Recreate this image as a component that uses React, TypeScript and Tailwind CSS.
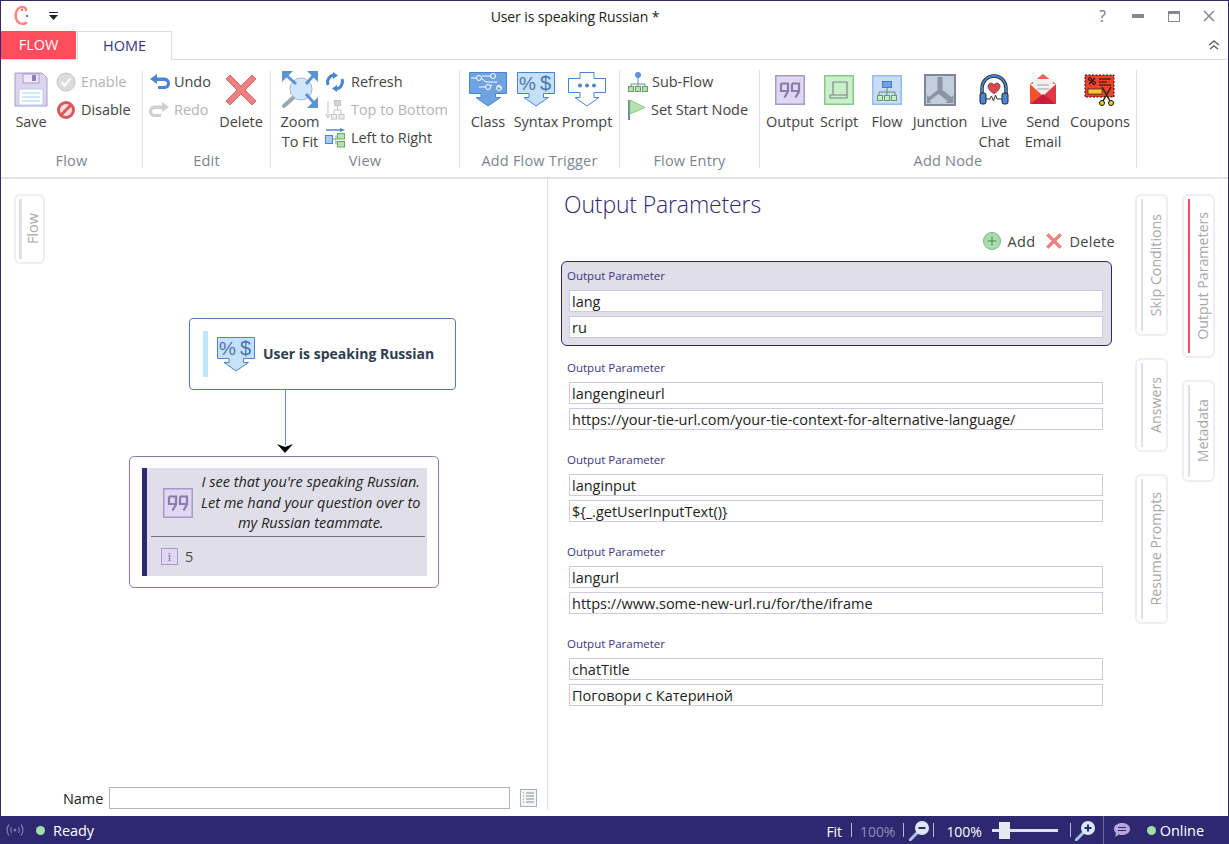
import type { ReactNode } from 'react';

const NAVY = '#2e2870';

function SaveIcon() {
  return (
    <svg width="34" height="35" viewBox="0 0 34 35">
      <path d="M1 1h27l5 5v28H1z" fill="#dcd3ee" stroke="#a99cc9" />
      <rect x="9" y="2" width="16" height="9" fill="#efeaf7" stroke="#a99cc9" />
      <rect x="18" y="3" width="4" height="6" fill="#8d80b5" />
      <rect x="5" y="17" width="24" height="16" fill="#fff" stroke="#b9cfe8" />
      <path d="M8 21h18M8 25h18M8 29h18" stroke="#a9d0f0" strokeWidth="1" />
    </svg>
  );
}

function CircleCheck() {
  return (
    <svg width="20" height="20" viewBox="0 0 20 20">
      <circle cx="10" cy="10" r="9" fill="#dcdcdc" stroke="#c4c4c4" />
      <path d="M5.5 10l3 3.500 6-7" fill="none" stroke="#fff" strokeWidth="2" />
    </svg>
  );
}

function CircleBan() {
  return (
    <svg width="20" height="20" viewBox="0 0 20 20">
      <circle cx="10" cy="10" r="7.500" fill="#f6dede" stroke="#d9585c" strokeWidth="3" />
      <path d="M5 15L15 5" stroke="#d9585c" strokeWidth="3" />
    </svg>
  );
}

function UndoIcon({ color = '#4a86cf', flip = false }: { color?: string; flip?: boolean }) {
  return (
    <svg width="21" height="18" viewBox="0 0 21 18" className={flip ? '-scale-x-100' : ''}>
      <path d="M8 1L1 6l7 5V8h7c2 0 3 1 3 2.500S17 13 15 13H9v3h6c4 0 6-2.500 6-5.500S19 4.500 15 4.500H8z" fill={color} />
    </svg>
  );
}

function RedX({ size = 32 }: { size?: number }) {
  return (
    <svg width={size} height={size} viewBox="0 0 32 32">
      <path d="M5 1l11 11L27 1l4 4-11 11 11 11-4 4-11-11L5 31l-4-4 11-11L1 5z" fill="#f08080" stroke="#dc6a6a" />
    </svg>
  );
}

function ZoomFitIcon() {
  return (
    <svg width="38" height="38" viewBox="0 0 38 38">
      <path d="M14 25L3 35" stroke="#9aa8b4" strokeWidth="4" strokeLinecap="round" />
      <circle cx="20" cy="18" r="11" fill="#cfe6fb" stroke="#a8b8c6" />
      <g stroke="#5b93d6" strokeWidth="3">
        <path d="M15 13L5 4" />
        <path d="M25 13l8-9" />
        <path d="M25 23l8 9" />
      </g>
      <g fill="#5b93d6">
        <path d="M1 0h11L1 11z" />
        <path d="M37 0H26l11 11z" />
        <path d="M37 37H26l11-11z" />
      </g>
    </svg>
  );
}

function RefreshIcon() {
  return (
    <svg width="20" height="20" viewBox="0 0 20 20">
      <g fill="none" stroke="#4a86cf" strokeWidth="3">
        <path d="M3 13A7.500 7.500 0 0 1 9 3" />
        <path d="M17 7a7.500 7.500 0 0 1-6 10" />
      </g>
      <path d="M8 0l5 3.500L8 7zM12 13v7l-5-3.500z" fill="#4a86cf" />
    </svg>
  );
}

function TopBottomIcon() {
  return (
    <svg width="20" height="20" viewBox="0 0 20 20" fill="none" stroke="#c4c4c4">
      <path d="M3 1v16M0.500 14L3 18l2.500-4" />
      <rect x="9.500" y="0.500" width="6" height="5" fill="#d4d4d4" />
      <path d="M12.500 6v4M9 14v-4h7v4" />
      <rect x="6.500" y="14.500" width="5" height="4.500" fill="#eee" />
      <rect x="14" y="14.500" width="5" height="4.500" fill="#eee" />
    </svg>
  );
}

function LeftRightIcon() {
  return (
    <svg width="21" height="20" viewBox="0 0 21 20">
      <path d="M1 2h15" stroke="#4a86cf" strokeWidth="1.500" />
      <path d="M15 0l5 2-5 2z" fill="#4a86cf" />
      <rect x="0.500" y="7.500" width="7" height="8" fill="#a9cdf0" stroke="#4a86cf" />
      <path d="M8 11h3M11 7.500v9" stroke="#7aa86f" fill="none" />
      <rect x="12.500" y="5.500" width="7" height="5.500" fill="#b7e0b5" stroke="#6aa866" />
      <rect x="12.500" y="13.500" width="7" height="5.500" fill="#b7e0b5" stroke="#6aa866" />
    </svg>
  );
}

function ClassIcon() {
  return (
    <svg width="38" height="35" viewBox="0 0 38 35">
      <path d="M0.500 0.500h37v21h-11v4h5L19 34 7 25.500h5v-4H0.500z" fill="#6fa3e0" stroke="#4a86cf" />
      <g fill="none" stroke="#fff">
        <path d="M2 6h6M12 6l5 4h11M13 4h9M10 15h7M21 14l2-1M28 14l4 2" />
        <circle cx="10" cy="6" r="2.500" />
        <circle cx="24" cy="4" r="2.500" />
        <circle cx="19" cy="15" r="2.500" />
        <circle cx="30" cy="16" r="2.500" />
      </g>
    </svg>
  );
}

function SyntaxIcon() {
  return (
    <svg width="38" height="35" viewBox="0 0 38 35">
      <path d="M0.500 0.500h37v21h-11v4h5L19 34 7 25.500h5v-4H0.500z" fill="#c5e0f8" stroke="#4a86cf" />
      <text x="2" y="18" fontSize="19" fill="#4a76a8" fontFamily="'Liberation Sans', sans-serif">%</text>
      <text x="23" y="18" fontSize="20" fill="#4a76a8" fontFamily="'Liberation Sans', sans-serif">$</text>
    </svg>
  );
}

function PromptIcon() {
  return (
    <svg width="38" height="35" viewBox="0 0 38 35">
      <path d="M12 0.500h14v6h11.500v14H26v5h5L19 34 7 25.500h5v-5H0.500v-14H12z" fill="#fff" stroke="#4a86cf" />
      <circle cx="12" cy="13.500" r="2" fill="#4a86cf" />
      <circle cx="19" cy="13.500" r="2" fill="#4a86cf" />
      <circle cx="26" cy="13.500" r="2" fill="#4a86cf" />
    </svg>
  );
}

function SubFlowIcon() {
  return (
    <svg width="20" height="20" viewBox="0 0 20 20">
      <circle cx="10" cy="3" r="3" fill="#5b93d6" />
      <path d="M10 6v6M3 14v-2h14v2M10 12v2" fill="none" stroke="#6a8a9a" />
      <rect x="0.500" y="14.500" width="5" height="5" fill="#b7e0b5" stroke="#5f9e5b" />
      <rect x="7.500" y="14.500" width="5" height="5" fill="#b7e0b5" stroke="#5f9e5b" />
      <rect x="14.500" y="14.500" width="5" height="5" fill="#b7e0b5" stroke="#5f9e5b" />
    </svg>
  );
}

function FlagIcon() {
  return (
    <svg width="20" height="22" viewBox="0 0 20 22">
      <path d="M1 1v20" stroke="#6b8aa5" strokeWidth="2" />
      <path d="M2 1l15 7.500L2 15z" fill="#b5e3b0" stroke="#8cc788" />
    </svg>
  );
}

function QuoteIcon({ size = 30 }: { size?: number }) {
  return (
    <svg width={size} height={size} viewBox="0 0 30 30">
      <rect x="0.750" y="0.750" width="28.500" height="28.500" fill="#e0d7f3" stroke="#a79ac8" strokeWidth="1.500" />
      <g fill="none" stroke="#8a7ba8" strokeWidth="2.200">
        <path d="M6 8.500h7v8l-3.500 6" />
        <path d="M6 8.500v7.500h7" />
        <path d="M17 8.500h7v8l-3.500 6" />
        <path d="M17 8.500v7.500h7" />
      </g>
    </svg>
  );
}

function ScriptIcon() {
  return (
    <svg width="30" height="30" viewBox="0 0 30 30">
      <rect x="0.750" y="0.750" width="28.500" height="28.500" fill="#c9efcb" stroke="#86c989" strokeWidth="1.500" />
      <path d="M9 7h14v13H9zM9 20H6v3h17v-3" fill="none" stroke="#7a8a7c" strokeWidth="1.200" />
    </svg>
  );
}

function FlowIcon() {
  return (
    <svg width="30" height="30" viewBox="0 0 30 30">
      <rect x="0.750" y="0.750" width="28.500" height="28.500" fill="#c9dcf5" stroke="#93bdf0" strokeWidth="1.500" />
      <rect x="10.500" y="6.500" width="9" height="6" fill="#6fa3e8" stroke="#4a7cc0" />
      <path d="M15 13v4M7 20v-3h16v3M15 17v3" fill="none" stroke="#5f8a70" />
      <rect x="5.500" y="20.500" width="5" height="5" fill="#c9efcb" stroke="#5f9e5b" />
      <rect x="12.500" y="20.500" width="5" height="5" fill="#c9efcb" stroke="#5f9e5b" />
      <rect x="19.500" y="20.500" width="5" height="5" fill="#c9efcb" stroke="#5f9e5b" />
    </svg>
  );
}

function JunctionIcon() {
  return (
    <svg width="32" height="32" viewBox="0 0 32 32">
      <rect x="1" y="1" width="30" height="30" fill="#c3cedc" stroke="#7d8894" strokeWidth="2" />
      <path d="M13.500 3h5v13l9 7 2-2v8h-8l2-2-9-7-9 7 2 2H3v-8l2 2 8.500-7z" fill="#8a96a6" />
    </svg>
  );
}

function LiveChatIcon() {
  return (
    <svg width="30" height="32" viewBox="0 0 30 32">
      <path d="M3 20v-6a12 12 0 0 1 24 0v6" fill="none" stroke="#222" strokeWidth="3.400" />
      <path d="M3 20v-6a12 12 0 0 1 24 0v6" fill="none" stroke="#4a86d8" strokeWidth="1.800" />
      <path d="M15 20c-4-3-6-5-6-7.500C9 10.500 10.500 9 12 9c1.300 0 2.400.700 3 1.800C15.600 9.700 16.700 9 18 9c1.500 0 3 1.500 3 3.500 0 2.500-2 4.500-6 7.500z" fill="#d9464e" stroke="#333" strokeWidth="0.600" />
      <path d="M7 25h4l1.500-3 2 5 2-6 1.500 4h5" fill="none" stroke="#333" />
      <rect x="1" y="19" width="6" height="11" rx="2" fill="#4a86d8" stroke="#222" />
      <rect x="23" y="19" width="6" height="11" rx="2" fill="#4a86d8" stroke="#222" />
    </svg>
  );
}

function EmailIcon() {
  return (
    <svg width="28" height="31" viewBox="0 0 28 31">
      <path d="M14 0L27 10H1z" fill="#f0624a" />
      <rect x="4" y="5" width="20" height="18" fill="#f1f1f1" />
      <path d="M8 11h12M8 15h12" stroke="#c8c8c8" strokeWidth="2" />
      <path d="M1 10l13 12L1 30z" fill="#f4512c" />
      <path d="M27 10L14 22l13 8z" fill="#e23744" />
      <path d="M1 30l13-10 13 10z" fill="#c81e3c" />
    </svg>
  );
}

function CouponIcon() {
  return (
    <svg width="32" height="32" viewBox="0 0 32 32">
      <rect x="1" y="1" width="29" height="22" fill="#f0402a" stroke="#111" strokeDasharray="2 1.500" />
      <path d="M5 10l6-6" stroke="#111" strokeWidth="1.200" />
      <circle cx="6" cy="5" r="1.500" fill="#f0402a" stroke="#111" />
      <circle cx="10" cy="9" r="1.500" fill="#f0402a" stroke="#111" />
      <path d="M15 5h12M15 8h8M15 11h12" stroke="#111" />
      <rect x="4" y="15" width="14" height="5" fill="#f3c92e" stroke="#111" strokeWidth="0.600" />
      <path d="M18 13l8 14M27 13l-8 14" stroke="#222" strokeWidth="1.500" />
      <circle cx="18" cy="29" r="2.500" fill="#f3c92e" stroke="#111" />
      <circle cx="27" cy="29" r="2.500" fill="#f3c92e" stroke="#111" />
    </svg>
  );
}

function BigButton({ icon, lines, className }: { icon: ReactNode; lines: string[]; className: string }) {
  return (
    <div className={`flex flex-col items-center pt-[8px] ${className}`}>
      <div className="flex h-[43px] items-center justify-center">{icon}</div>
      {lines.map((line) => (
        <div key={line} className="mt-px h-[19px] whitespace-nowrap text-center leading-5">
          {line}
        </div>
      ))}
    </div>
  );
}

function SmallButton({ icon, label, disabled, gap = 'w-[25px]' }: { icon: ReactNode; label: string; disabled?: boolean; gap?: string }) {
  return (
    <div className={`flex h-7 items-center whitespace-nowrap ${disabled ? 'text-[#b4b4b4]' : ''}`}>
      <div className={`flex items-center ${gap}`}>{icon}</div>
      {label}
    </div>
  );
}

function Group({ label, width, children }: { label: string; width: string; children: ReactNode }) {
  return (
    <div className="flex h-[118px]">
      <div className={`flex flex-col ${width}`}>
        <div className="flex h-[91px]">{children}</div>
        <div className="h-5 text-center leading-5 tracking-[0.2px] text-[#7c8591]">{label}</div>
      </div>
      <div className="my-[10px] w-px bg-[#e2e2e2]" />
    </div>
  );
}

function SideTab({ label, height, active }: { label: string; height: string; active?: boolean }) {
  return (
    <div className={`flex w-[33px] rounded-[6px] border-2 border-[#eeedf3] py-[3px] pl-[4px] ${height}`}>
      <div className={`w-[3px] ${active ? 'bg-[#ff4d5e]' : 'bg-[#e0dfe9]'}`} />
      <div className="flex flex-1 items-center justify-center pl-[3px] text-[#a8a8a8]">
        <span className="rotate-180 whitespace-nowrap text-[14.200px] leading-5 tracking-normal [writing-mode:vertical-rl]">{label}</span>
      </div>
    </div>
  );
}

function ParamCard({ name, value, selected }: { name: string; value: string; selected?: boolean }) {
  return (
    <div className={`h-[85px] rounded-[6px] border pl-[7px] pr-[8px] pt-[5px] ${selected ? 'border-[#2e2870] bg-[#e0dfe9]' : 'border-transparent'}`}>
      <div className="-ml-[2px] mb-[6px] h-[17px] text-[11.500px] leading-[17px] tracking-normal text-[#3b3580]">Output Parameter</div>
      <div className="flex flex-col gap-[4px]">
        <input readOnly value={name} className="h-[22px] w-full border border-[#d3c8df] bg-white pl-[2px] tracking-normal text-[#222] outline-none" />
        <input readOnly value={value} className="h-[22px] w-full border border-[#d3c8df] bg-white pl-[2px] tracking-normal text-[#222] outline-none" />
      </div>
    </div>
  );
}

function Sep() {
  return <div className="h-[14px] w-px bg-[#b9b6d6]" />;
}

function MagnifierIcon({ plus }: { plus?: boolean }) {
  return (
    <svg width="21" height="21" viewBox="0 0 21 21">
      <path d="M8 13L1 20" stroke="#a9c4de" strokeWidth="3" strokeLinecap="round" />
      <circle cx="13" cy="8" r="7" fill="#dbe9f7" />
      <path d="M9.500 8h7" stroke="#2e2870" strokeWidth="2" />
      {plus && <path d="M13 4.500v7" stroke="#2e2870" strokeWidth="2" />}
    </svg>
  );
}

function params() {
  return [
    { name: 'lang', value: 'ru', selected: true },
    { name: 'langengineurl', value: 'https://your-tie-url.com/your-tie-context-for-alternative-language/' },
    { name: 'langinput', value: '${_.getUserInputText()}' },
    { name: 'langurl', value: 'https://www.some-new-url.ru/for/the/iframe' },
    { name: 'chatTitle', value: 'Поговори с Катериной' },
  ];
}

export default function App() {
  return (
    <div className="flex h-[844px] w-[1229px] flex-col overflow-hidden border-x border-t border-[#2e2870] bg-white font-['Open_Sans',sans-serif] text-[14.500px] tracking-[-0.05px] text-[#444]">
      {/* title bar */}
      <div className="flex h-[30px] shrink-0 items-center">
        <div className="flex w-[60px] items-center pl-[12px]">
          <svg width="18" height="20" viewBox="0 0 18 20">
            <path d="M13 17c-5 2-9 0-10-5C2 7 4 2 8 1c3-.500 5 1 5 3" fill="none" stroke="#f8887f" strokeWidth="2.500" strokeLinecap="round" />
            <circle cx="9" cy="4" r="1" fill="#e33" />
            <circle cx="14" cy="10" r="1.200" fill="#777" />
          </svg>
          <svg width="11" height="9" viewBox="0 0 11 9" className="ml-[17px]">
            <path d="M1 0.500h9" stroke="#222" />
            <path d="M1 3h9L5.500 8z" fill="#222" />
          </svg>
        </div>
        <div className="flex-1 text-center text-[14px] tracking-[-0.1px] text-[#222]">User is speaking Russian *</div>
        <div className="flex w-[139px] items-center text-[#777]">
          <div className="w-[31px] pl-[10px] text-[16px]">?</div>
          <div className="flex w-[36px] justify-center">
            <div className="h-[4px] w-[12px] bg-[#888]" />
          </div>
          <div className="flex w-[36px] justify-center">
            <div className="h-[11px] w-[12px] border border-t-[3px] border-[#888]" />
          </div>
          <svg width="12" height="12" viewBox="0 0 12 12" className="ml-[11px]">
            <path d="M1 1l10 10M11 1L1 11" stroke="#888" strokeWidth="1.500" />
          </svg>
        </div>
      </div>

      {/* tabs */}
      <div className="flex h-[29px] shrink-0 items-stretch border-b border-[#dcdcdc]">
        <div className="flex w-[75px] items-center justify-center bg-[#ff4d5e] text-white">FLOW</div>
        <div className="-mb-px ml-px flex w-[95px] items-center justify-center border-x border-t border-[#dcdcdc] bg-white text-[#3a3480]">HOME</div>
        <div className="flex flex-1 items-center justify-end pr-[8px]">
          <svg width="12" height="10" viewBox="0 0 12 10" fill="none" stroke="#666" strokeWidth="1.500">
            <path d="M1 5l5-4 5 4M2 9l4-3 4 3" />
          </svg>
        </div>
      </div>

      {/* ribbon */}
      <div className="flex h-[119px] shrink-0 border-b-2 border-[#e2e2e2]">
        <Group label="Flow" width="w-[141px]">
          <BigButton icon={<SaveIcon />} lines={['Save']} className="ml-[11px] w-[38px]" />
          <div className="ml-[6px] pt-[8px]">
            <SmallButton icon={<CircleCheck />} label="Enable" disabled />
            <SmallButton icon={<CircleBan />} label="Disable" />
          </div>
        </Group>
        <Group label="Edit" width="w-[127px]">
          <div className="ml-[6px] w-[67px] pt-[8px]">
            <SmallButton icon={<UndoIcon />} label="Undo" />
            <SmallButton icon={<UndoIcon color="#cfcfcf" flip />} label="Redo" disabled />
          </div>
          <BigButton icon={<RedX />} lines={['Delete']} className="w-[50px]" />
        </Group>
        <Group label="View" width="w-[188px]">
          <BigButton icon={<ZoomFitIcon />} lines={['Zoom', 'To Fit']} className="ml-[9px] w-[40px]" />
          <div className="ml-[5px] pt-[8px]">
            <SmallButton icon={<RefreshIcon />} label="Refresh" gap="w-[26px]" />
            <SmallButton icon={<TopBottomIcon />} label="Top to Bottom" disabled gap="w-[26px]" />
            <SmallButton icon={<LeftRightIcon />} label="Left to Right" gap="w-[26px]" />
          </div>
        </Group>
        <Group label="Add Flow Trigger" width="w-[159px]">
          <BigButton icon={<ClassIcon />} lines={['Class']} className="ml-[4px] w-[48px]" />
          <BigButton icon={<SyntaxIcon />} lines={['Syntax']} className="w-[48px]" />
          <BigButton icon={<PromptIcon />} lines={['Prompt']} className="w-[54px]" />
        </Group>
        <Group label="Flow Entry" width="w-[139px]">
          <div className="ml-[8px] pt-[8px]">
            <SmallButton icon={<SubFlowIcon />} label="Sub-Flow" gap="w-[24px]" />
            <SmallButton icon={<FlagIcon />} label="Set Start Node" gap="w-[23px]" />
          </div>
        </Group>
        <Group label="Add Node" width="w-[376px]">
          <BigButton icon={<QuoteIcon />} lines={['Output']} className="ml-[6px] w-[48px]" />
          <BigButton icon={<ScriptIcon />} lines={['Script']} className="w-[50px]" />
          <BigButton icon={<FlowIcon />} lines={['Flow']} className="w-[46px]" />
          <BigButton icon={<JunctionIcon />} lines={['Junction']} className="w-[60px]" />
          <BigButton icon={<LiveChatIcon />} lines={['Live', 'Chat']} className="w-[48px]" />
          <BigButton icon={<EmailIcon />} lines={['Send', 'Email']} className="w-[50px]" />
          <BigButton icon={<CouponIcon />} lines={['Coupons']} className="w-[64px]" />
        </Group>
      </div>

      {/* main */}
      <div className="flex min-h-0 flex-1">
        {/* canvas */}
        <div className="relative mb-[7px] w-[547px] shrink-0 border-r border-[#dcdcdc]">
          <div className="absolute left-[13px] top-[15px] flex h-[70px] w-[31px] rounded-[6px] border-2 border-[#eeedf3] py-[3px] pl-[3px]">
            <div className="w-[3px] bg-[#e0dfe9]" />
            <div className="flex flex-1 items-center justify-center pl-[1px] text-[#a8a8a8]">
              <span className="rotate-180 leading-5 tracking-normal [writing-mode:vertical-rl]">Flow</span>
            </div>
          </div>

          <div className="absolute left-[188px] top-[139px] flex h-[72px] w-[267px] items-center rounded-[4px] border border-[#4f7fbf] bg-white pl-[13px]">
            <div className="h-[46px] w-[5px] bg-[#bfe6ff]" />
            <div className="ml-[9px]">
              <SyntaxIcon />
            </div>
            <div className="mb-[2px] ml-[8px] whitespace-nowrap text-[14px] font-bold tracking-normal text-[#2c3e50]">User is speaking Russian</div>
          </div>

          <div className="absolute left-[283.500px] top-[211px] h-[55px] w-[1.500px] bg-[#5a8fd8]" />
          <svg width="16" height="10" viewBox="0 0 16 10" className="absolute left-[276px] top-[265px]">
            <path d="M0 0l8 3 8-3-8 9z" fill="#000" />
          </svg>

          <div className="absolute left-[128px] top-[277px] h-[132px] w-[310px] rounded-[5px] border border-[#9474b0] bg-white p-[11px] pl-[12px]">
            <div className="flex h-[108px] border-l-[5px] border-[#2e2870] bg-[#e0dfe9]">
              <div className="flex-1 pl-[4px] pr-[5px]">
                <div className="flex h-[68px] items-center">
                  <div className="ml-[12px] mt-[2px] shrink-0">
                    <QuoteIcon />
                  </div>
                  <div className="ml-[8px] mr-[4px] flex-1 whitespace-nowrap pt-[2px] text-center italic leading-[20.500px] tracking-normal text-[#222]">
                    I see that you're speaking Russian.
                    <br />
                    Let me hand your question over to
                    <br />
                    my Russian teammate.
                  </div>
                </div>
                <div className="h-px bg-[#73737f]" />
                <div className="flex h-[39px] items-center pl-[10px]">
                  <div className="flex h-[17px] w-[17px] items-center justify-center border border-[#a79ac8] bg-[#e0d7f3] font-['Liberation_Serif',serif] text-[12px] text-[#7a6a9a]">i</div>
                  <span className="ml-[7px]">5</span>
                </div>
              </div>
            </div>
          </div>

          <div className="absolute bottom-0 left-[62px] flex h-[22px] items-center">
            <span className="pt-[2px] text-[#222]">Name</span>
            <div className="ml-[6px] h-[22px] w-[401px] border border-[#b5b5b5] bg-white" />
            <svg width="17" height="18" viewBox="0 0 17 18" className="ml-[10px]">
              <rect x="0.500" y="0.500" width="16" height="17" fill="#f4f6f9" stroke="#9fb2c6" />
              <path d="M3 4h1M6 4h8M3 7h1M6 7h8M3 10h1M6 10h8M3 13h1M6 13h8" stroke="#8b8b8b" />
            </svg>
          </div>
        </div>

        {/* output parameters */}
        <div className="w-[572px] shrink-0 pl-[13px] pr-[8px]">
          <h1 className="ml-[3px] mt-[8px] h-[34px] whitespace-nowrap text-[23px] font-light leading-[34px] tracking-[-0.15px] text-[#2e2870]">Output Parameters</h1>
          <div className="-mr-[3px] mt-[8px] flex h-6 items-center justify-end tracking-[0.3px]">
            <svg width="18" height="18" viewBox="0 0 18 18">
              <circle cx="9" cy="9" r="8.500" fill="#a9dcae" stroke="#78b880" />
              <path d="M9 4.500v9M4.500 9h9" stroke="#4a8a55" />
            </svg>
            <span className="ml-[7px] pt-[2px]">Add</span>
            <div className="ml-[11px]">
              <RedX size={16} />
            </div>
            <span className="ml-[7px] pt-[2px]">Delete</span>
          </div>
          <div className="mt-[8px] flex flex-col gap-[7px]">
            {params().map((p) => (
              <ParamCard key={p.name} name={p.name} value={p.value} selected={p.selected} />
            ))}
          </div>
        </div>

        {/* side tabs */}
        <div className="ml-[15px] flex gap-[14px] pt-[15px]">
          <div className="flex flex-col gap-[22px]">
            <SideTab label="Skip Conditions" height="h-[142px]" />
            <SideTab label="Answers" height="h-[94px]" />
            <SideTab label="Resume Prompts" height="h-[150px]" />
          </div>
          <div className="flex flex-col gap-[22px]">
            <SideTab label="Output Parameters" height="h-[164px]" active />
            <SideTab label="Metadata" height="h-[102px]" />
          </div>
        </div>
      </div>

      {/* status bar */}
      <div className="-mx-px flex h-[28px] shrink-0 items-center text-white" style={{ backgroundColor: NAVY }}>
        <svg width="20" height="14" viewBox="0 0 20 14" className="ml-[5px]" fill="none" stroke="#7d78ab" strokeWidth="1.300">
          <path d="M4 1.500C1.500 4.500 1.500 9.500 4 12.500M16 1.500c2.500 3 2.500 8 0 11M6.500 4C5.500 6 5.500 8 6.500 10M13.500 4c1 2 1 4 0 6" />
          <circle cx="10" cy="7" r="1.500" fill="#7d78ab" stroke="none" />
        </svg>
        <div className="ml-[11px] h-[9px] w-[9px] rounded-full bg-[#a3dca8]" />
        <span className="ml-[8px] pt-[2px]">Ready</span>

        <div className="ml-auto flex items-center">
          <span className="pt-[2px] text-[14px]">Fit</span>
          <div className="ml-[9px]"><Sep /></div>
          <span className="ml-[8px] pt-[2px] text-[14px] text-[#8f8cb8]">100%</span>
          <div className="ml-[8px]"><Sep /></div>
          <div className="ml-[5px]"><MagnifierIcon /></div>
          <div className="ml-[3px]"><Sep /></div>
          <span className="ml-[12px] pt-[2px] text-[14px]">100%</span>
          <div className="relative ml-[10px] flex h-[18px] w-[66px] items-center">
            <div className="h-[3px] w-full bg-[#dfe0ee]" />
            <div className="absolute left-[7px] h-[17px] w-[11px] bg-[#e8e8f0]" />
          </div>
          <div className="ml-[12px]"><Sep /></div>
          <div className="ml-[4px]"><MagnifierIcon plus /></div>
          <div className="ml-[7px] h-[28px] w-px bg-[#6f6aa3]" />
          <svg width="18" height="16" viewBox="0 0 18 16" className="ml-[9px]">
            <path d="M9 1c4.500 0 8 2.500 8 6s-3.500 6-8 6c-1 0-2-.100-3-.500L2 15l1-4C1.800 10 1 8.500 1 7c0-3.500 3.500-6 8-6z" fill="#b9a6dc" />
            <path d="M5 5.500h8M5 8.500h8" stroke="#2e2870" />
          </svg>
          <div className="ml-[16px] h-[9px] w-[9px] rounded-full bg-[#a3dca8]" />
          <span className="ml-[4px] mr-[25px] pt-[2px]">Online</span>
        </div>
      </div>
    </div>
  );
}
